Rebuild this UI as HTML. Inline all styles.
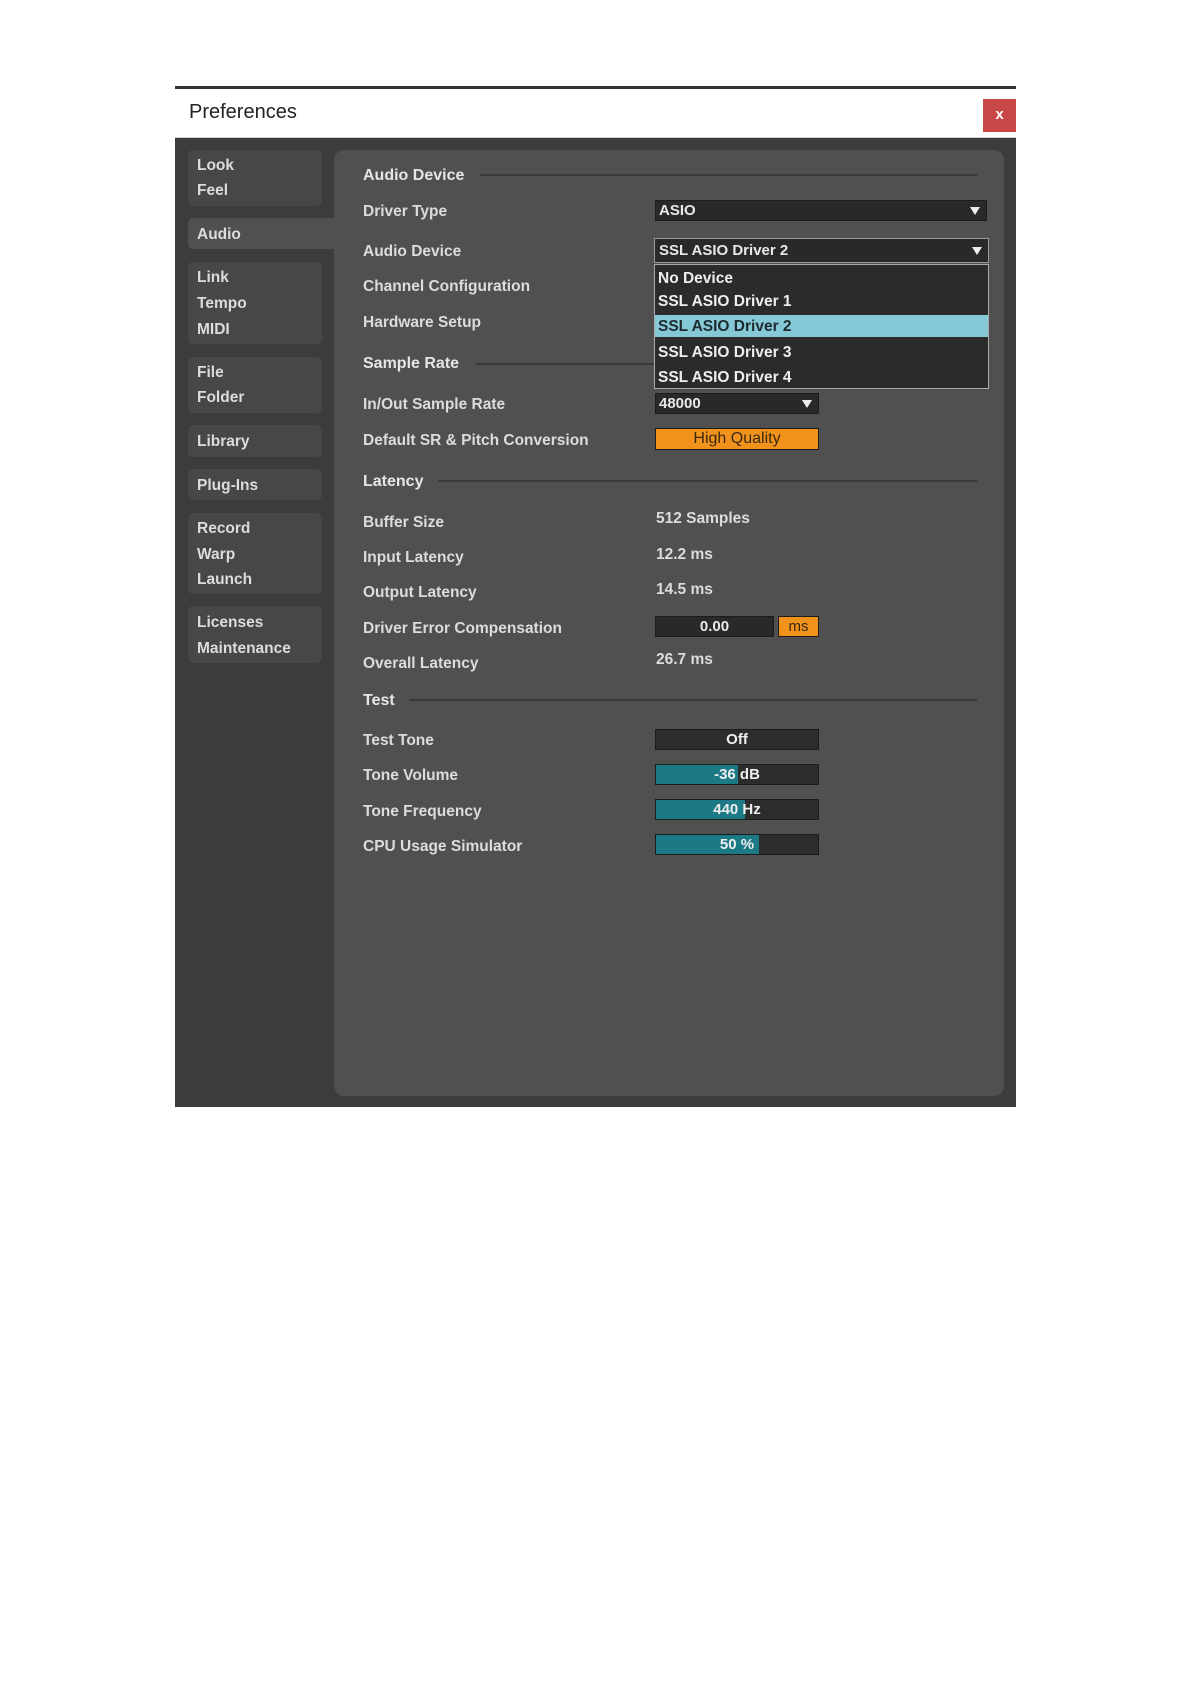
<!DOCTYPE html>
<html><head><meta charset="utf-8"><style>
body{margin:0;width:1190px;height:1684px;background:#fff;position:relative;font-family:"Liberation Sans",sans-serif;overflow:hidden}
.a{position:absolute}
.win{left:175px;top:86px;width:841px;height:1018px;background:#3c3c3c;border-top:3px solid #333}
.tb{left:175px;top:89px;width:841px;height:48px;background:#fff;border-bottom:1px solid #ccc}
.sb{background:#474747;border-radius:5px;left:188px;width:134px}
.t{color:#dcdcdc;font-weight:bold;font-size:15.5px;line-height:18px;transform:translateY(-8px)}
.h{color:#e6e6e6;font-weight:bold;font-size:16px;line-height:18px;transform:translateY(-8px)}
.ln{height:2px;background:#3a3a3a}
.box{background:#292929;border:1px solid #1c1c1c;box-sizing:border-box;color:#e8e8e8;font-weight:bold;font-size:15px;line-height:19px}
.arr{position:absolute;right:6px;top:6px;width:0;height:0;border-left:5px solid transparent;border-right:5px solid transparent;border-top:8px solid #eee}
.bar{left:655px;width:164px;height:21px;background:#2c2c2c;border:1px solid #1c1c1c;box-sizing:border-box;color:#eee;font-weight:bold;font-size:15px;text-align:center;line-height:19px}
.fill{position:absolute;left:0;top:0;bottom:0;background:#1c7a86}
.bar span{position:relative}
</style></head><body>
<div class="a win"></div>
<div class="a tb"></div>
<div class="a" style="left:189px;top:101px;font-size:20px;color:#222">Preferences</div>
<div class="a" style="left:983px;top:99px;width:33px;height:33px;background:#c84848;color:#fff;font-weight:bold;font-size:15px;text-align:center;line-height:32px">x</div>
<div class="a" style="left:334px;top:150px;width:670px;height:946px;background:#505050;border-radius:10px"></div>
<div class="a sb" style="top:150px;height:56px"></div>
<div class="a" style="left:188px;top:218px;width:160px;height:31px;background:#505050;border-radius:5px 0 0 5px"></div>
<div class="a sb" style="top:262px;height:82px"></div>
<div class="a sb" style="top:357px;height:56px"></div>
<div class="a sb" style="top:425px;height:32px"></div>
<div class="a sb" style="top:469px;height:31px"></div>
<div class="a sb" style="top:513px;height:81px"></div>
<div class="a sb" style="top:606px;height:57px"></div>
<div class="a t" style="left:197px;top:165px">Look</div>
<div class="a t" style="left:197px;top:190px">Feel</div>
<div class="a t" style="left:197px;top:234px">Audio</div>
<div class="a t" style="left:197px;top:277px">Link</div>
<div class="a t" style="left:197px;top:303px">Tempo</div>
<div class="a t" style="left:197px;top:329px">MIDI</div>
<div class="a t" style="left:197px;top:372px">File</div>
<div class="a t" style="left:197px;top:397px">Folder</div>
<div class="a t" style="left:197px;top:441px">Library</div>
<div class="a t" style="left:197px;top:485px">Plug-Ins</div>
<div class="a t" style="left:197px;top:528px">Record</div>
<div class="a t" style="left:197px;top:554px">Warp</div>
<div class="a t" style="left:197px;top:579px">Launch</div>
<div class="a t" style="left:197px;top:622px">Licenses</div>
<div class="a t" style="left:197px;top:648px">Maintenance</div>

<div class="a h" style="left:363px;top:175px">Audio Device</div>
<div class="a ln" style="left:480px;top:174px;width:497px"></div>
<div class="a t" style="left:363px;top:211px">Driver Type</div>
<div class="a t" style="left:363px;top:251px">Audio Device</div>
<div class="a t" style="left:363px;top:286px">Channel Configuration</div>
<div class="a t" style="left:363px;top:322px">Hardware Setup</div>
<div class="a h" style="left:363px;top:363px">Sample Rate</div>
<div class="a ln" style="left:476px;top:363px;width:180px"></div>
<div class="a t" style="left:363px;top:404px">In/Out Sample Rate</div>
<div class="a t" style="left:363px;top:440px">Default SR &amp; Pitch Conversion</div>
<div class="a h" style="left:363px;top:481px">Latency</div>
<div class="a ln" style="left:438px;top:480px;width:539px"></div>
<div class="a t" style="left:363px;top:522px">Buffer Size</div>
<div class="a t" style="left:363px;top:557px">Input Latency</div>
<div class="a t" style="left:363px;top:592px">Output Latency</div>
<div class="a t" style="left:363px;top:628px">Driver Error Compensation</div>
<div class="a t" style="left:363px;top:663px">Overall Latency</div>
<div class="a h" style="left:363px;top:700px">Test</div>
<div class="a ln" style="left:409px;top:699px;width:568px"></div>
<div class="a t" style="left:363px;top:740px">Test Tone</div>
<div class="a t" style="left:363px;top:775px">Tone Volume</div>
<div class="a t" style="left:363px;top:811px">Tone Frequency</div>
<div class="a t" style="left:363px;top:846px">CPU Usage Simulator</div>

<div class="a t" style="left:656px;top:518px">512 Samples</div>
<div class="a t" style="left:656px;top:554px">12.2 ms</div>
<div class="a t" style="left:656px;top:589px">14.5 ms</div>
<div class="a t" style="left:656px;top:659px">26.7 ms</div>

<div class="a box" style="left:655px;top:200px;width:332px;height:21px;padding-left:3px">ASIO<div class="arr"></div></div>
<div class="a box" style="left:654px;top:238px;width:335px;height:25px;padding:2px 0 0 4px;border:1px solid #999;background:#292929">SSL ASIO Driver 2<div class="arr" style="top:8px"></div></div>
<div class="a" style="left:654px;top:264px;width:335px;height:125px;background:#2b2b2b;border:1px solid #aaa;box-sizing:border-box"></div>
<div class="a" style="left:655px;top:315px;width:333px;height:22px;background:#85c9d7"></div>
<div class="a t" style="left:658px;top:278px;color:#eee">No Device</div>
<div class="a t" style="left:658px;top:301px;color:#eee">SSL ASIO Driver 1</div>
<div class="a t" style="left:658px;top:326px;color:#1e2a30">SSL ASIO Driver 2</div>
<div class="a t" style="left:658px;top:352px;color:#eee">SSL ASIO Driver 3</div>
<div class="a t" style="left:658px;top:377px;color:#eee">SSL ASIO Driver 4</div>
<div class="a box" style="left:655px;top:393px;width:164px;height:21px;padding-left:3px">48000<div class="arr"></div></div>
<div class="a box" style="left:655px;top:428px;width:164px;height:22px;background:#f0921c;color:#3a2a10;text-align:center;font-weight:normal;font-size:16px">High Quality</div>
<div class="a box" style="left:655px;top:616px;width:119px;height:21px;text-align:center">0.00</div>
<div class="a box" style="left:778px;top:616px;width:41px;height:21px;background:#f0921c;color:#3a2a10;text-align:center;font-weight:normal">ms</div>
<div class="a bar" style="top:729px"><span>Off</span></div>
<div class="a bar" style="top:764px"><div class="fill" style="width:82px"></div><span>-36 dB</span></div>
<div class="a bar" style="top:799px"><div class="fill" style="width:89px"></div><span>440 Hz</span></div>
<div class="a bar" style="top:834px"><div class="fill" style="width:103px"></div><span>50 %</span></div>
</body></html>
